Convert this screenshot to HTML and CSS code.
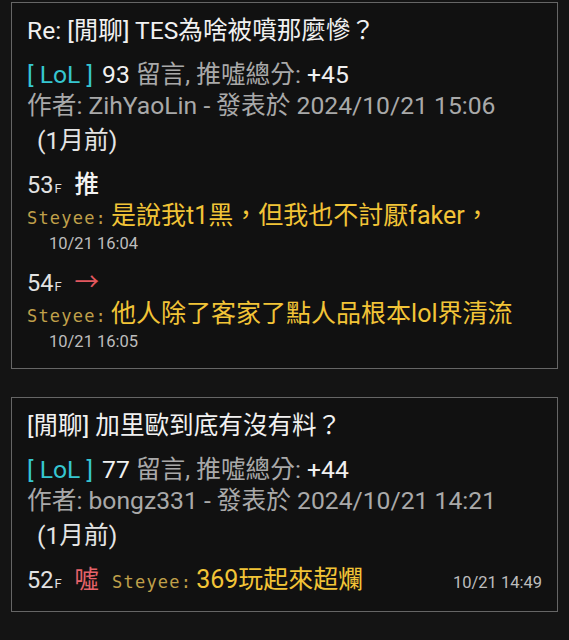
FILE: index.html
```html
<!DOCTYPE html>
<html lang="zh-Hant">
<head>
<meta charset="utf-8">
<title>PTT</title>
<link rel="stylesheet" href="styles.css">
</head>
<body>
<div class="card">
  <div class="title">Re: [閒聊] TES為啥被噴那麼慘？</div>
  <div class="stats"><span class="board">[ LoL ]</span><span class="num">93</span> 留言, 推噓總分: <span class="num">+45</span></div>
  <div class="author">作者: ZihYaoLin - 發表於 2024/10/21 15:06</div>
  <div class="ago">(1月前)</div>
  <div class="push">
    <div class="push-head"><span class="floor">53<small>F</small></span><span class="tag tag-up">推</span></div>
    <div class="push-body"><span class="user">Steyee:</span><span class="content">是說我t1黑，但我也不討厭faker，</span></div>
    <div class="push-time">10/21 16:04</div>
  </div>
  <div class="push">
    <div class="push-head"><span class="floor">54<small>F</small></span><span class="tag tag-arrow">→</span></div>
    <div class="push-body"><span class="user">Steyee:</span><span class="content">他人除了客家了點人品根本lol界清流</span></div>
    <div class="push-time">10/21 16:05</div>
  </div>
</div>
<div class="card card-last">
  <div class="title">[閒聊] 加里歐到底有沒有料？</div>
  <div class="stats"><span class="board">[ LoL ]</span><span class="num">77</span> 留言, 推噓總分: <span class="num">+44</span></div>
  <div class="author">作者: bongz331 - 發表於 2024/10/21 14:21</div>
  <div class="ago">(1月前)</div>
  <div class="push push-inline">
    <span class="inline-time">10/21 14:49</span><span class="floor">52<small>F</small></span><span class="tag tag-down">噓</span><span class="user">Steyee:</span><span class="content">369玩起來超爛</span>
  </div>
</div>
</body>
</html>
```
FILE: styles.css
```css
html, body {
  background: #141414;
}
body {
  margin: 0;
  padding: 2px 11px 0;
  font-family: Roboto, "Noto Sans CJK TC", sans-serif;
}
.card {
  border: 1px solid #666;
  background: #111111;
  padding: 12px 15px 14px;
  margin-bottom: 28px;
}
.card-last {
  padding-bottom: 16px;
}
.title {
  font-size: 24.6px;
  line-height: 32px;
  color: #f1f1f1;
  white-space: nowrap;
}
.stats {
  margin-top: 13px;
  font-size: 24.7px;
  line-height: 30px;
  color: #a9a9a9;
  white-space: nowrap;
}
.board {
  color: #36c6d0;
  margin-right: 9px;
}
.num {
  color: #f0f0f0;
}
.author {
  font-size: 24.7px;
  line-height: 31px;
  color: #a9a9a9;
  white-space: nowrap;
}
.ago {
  margin-top: 5px;
  padding-left: 10px;
  font-size: 24.7px;
  line-height: 30px;
  color: #e4e4e4;
}
.push {
  margin-top: 14px;
}
.push + .push {
  margin-top: 12px;
}
.push-head {
  font-size: 24px;
  line-height: 30px;
}
.floor {
  font-size: 23.5px;
  line-height: 1;
  color: #e2e2e2;
  margin-right: 13px;
}
.floor small {
  font-size: 13px;
  line-height: 1;
  margin-left: 1px;
}
.tag {
  font-size: 24.5px;
  line-height: 1;
}
.tag-up {
  color: #f4f4f4;
  font-weight: 500;
}
.tag-arrow {
  color: #e2585f;
}
.tag-down {
  color: #e5636a;
  margin-right: 13px;
}
.push-body {
  font-size: 24px;
  line-height: 32px;
  white-space: nowrap;
}
.user {
  font-family: "DejaVu Sans Mono", "Liberation Mono", monospace;
  font-size: 17px;
  line-height: 1;
  letter-spacing: 1.2px;
  color: #c0a04a;
}
.content {
  font-size: 25px;
  line-height: 1;
  color: #f2c437;
  margin-left: 4px;
}
.push-time {
  padding-left: 22px;
  font-size: 16.5px;
  line-height: 24px;
  color: #bdbdbd;
}
.push-inline {
  font-size: 24px;
  line-height: 30px;
  white-space: nowrap;
}
.inline-time {
  float: right;
  padding-top: 3px;
  font-size: 16.5px;
  line-height: 30px;
  color: #bdbdbd;
}
```
